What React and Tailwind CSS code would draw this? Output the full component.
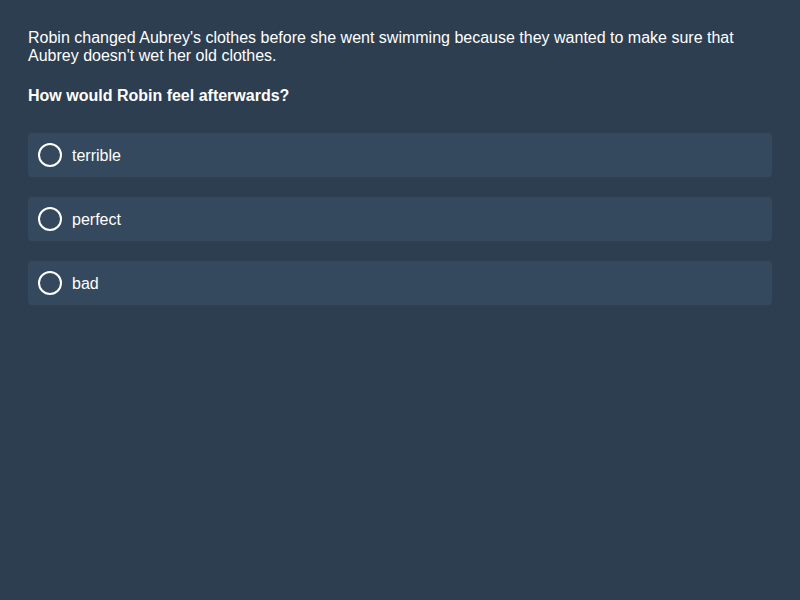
export default function App() {
    const options = ["terrible", "perfect", "bad"];

    return (
        <div
            className="min-h-screen w-full bg-[#2c3e50] text-white px-[28px] pt-[29px] pb-[28px]"
            style={{ fontFamily: '"Liberation Sans", Arial, sans-serif' }}
        >
            <p className="text-[16px] leading-[18px]">
                Robin changed Aubrey's clothes before she went swimming because they wanted to make sure that Aubrey doesn't wet her old clothes.
            </p>

            <p className="mt-[22px] text-[16px] leading-[18px] font-bold">
                How would Robin feel afterwards?
            </p>

            <div className="mt-[28px] flex flex-col gap-[20px]">
                {options.map((opt) => (
                    <label
                        key={opt}
                        className="flex items-center gap-[10px] h-[44px] px-[10px] rounded-[4px] bg-[#34495e] cursor-pointer"
                    >
                        <span className="w-[24px] h-[24px] rounded-full border-2 border-white shrink-0"></span>
                        <span className="pt-[2px] text-[16px] leading-[18px]">{opt}</span>
                    </label>
                ))}
            </div>
        </div>
    );
}
